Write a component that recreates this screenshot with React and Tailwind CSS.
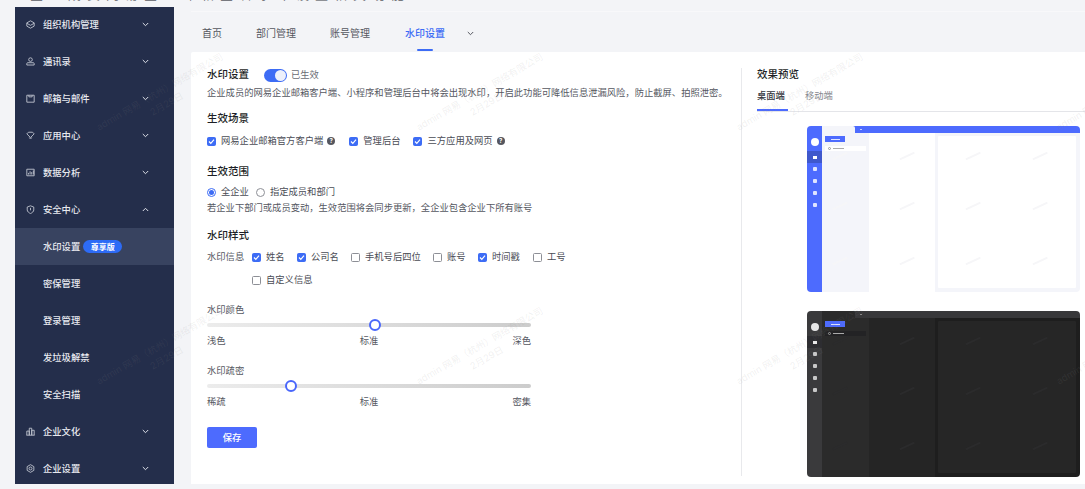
import React from "react";

const font = { fontFamily: '"Inter","Noto Sans CJK SC",sans-serif' };

const Chevron = ({ up }) => (
  <svg width="7" height="5" viewBox="0 0 7 5" fill="none" stroke="currentColor" strokeWidth="1">
    <path d={up ? "M.8 4 3.5 1.300 6.200 4" : "M.8 1 3.500 3.700 6.200 1"} />
  </svg>
);

const I = ({ children }) => (
  <svg width="9" height="9" viewBox="0 0 11 11" fill="none" stroke="#c0c4cf" strokeWidth="1.100" className="shrink-0">
    {children}
  </svg>
);

const icons = {
  org: <I><path d="M1 3.500 5.500 1 10 3.500v4L5.500 10 1 7.500z" /><path d="M1 4l4.500 2.500L10 4" /></I>,
  contact: <I><circle cx="5.500" cy="3.200" r="2.200" /><path d="M1 9.800V8c0-.6.4-1 1-1h7c.6 0 1 .4 1 1v1.800z" /></I>,
  mail: <I><path d="M1 1.500h9v8.500H1z" /><path d="M3.500 1.500v2h4v-2" /></I>,
  app: <I><path d="M1 3.500 3 1.500h5l2 2-4.500 4.500z" /><path d="M3.500 8c1.500 1.300 2.500 1.300 4 0" /></I>,
  data: <I><path d="M1 1.500h9v8H1z" /><path d="M3 8V6M5 8V4M7 8V5M9 8V3" /></I>,
  safe: <I><path d="M5.500 1 9.500 2.500V6c0 2-2 3.500-4 4.500-2-1-4-2.500-4-4.500V2.500z" /><path d="M5.500 3.500V6.500" /></I>,
  culture: <I><path d="M1 10V5h3v5M4 10V1.500h3V10M7 10V4h3v6M.5 10h10" /></I>,
  setting: <I><path d="M5.500 .8 9.600 3.200v4.600L5.500 10.200 1.400 7.800V3.200z" /><circle cx="5.500" cy="5.500" r="1.800" /></I>,
};

const Row = ({ icon, label, open, sub, active, badge }) => (
  <div className={`h-[37px] shrink-0 flex items-center text-[9.300px] text-[#e8eaf0] font-medium ${active ? "bg-[#384360]" : ""}`}>
    <div className="w-[28px] shrink-0 flex justify-end pr-[8px]">{icon && !sub ? icons[icon] : null}</div>
    <span className="whitespace-nowrap">{label}</span>
    {badge && (
      <span className="ml-[3px] h-[13px] w-[39px] rounded-full bg-[#2d6bf6] text-white text-[8px] font-bold flex items-center justify-center">
        {badge}
      </span>
    )}
    {!sub && (
      <span className="ml-auto mr-[25px] text-[#dfe2ea] flex">
        <Chevron up={open} />
      </span>
    )}
  </div>
);

const Check = ({ on }) => (
  <span className={`w-[9px] h-[9px] rounded-[1.500px] shrink-0 flex items-center justify-center border ${on ? "bg-[#3d6cf5] border-[#3d6cf5]" : "bg-white border-[#8d8f96]"}`}>
    {on && (
      <svg width="7" height="7" viewBox="0 0 7 7" fill="none" stroke="#fff" strokeWidth="1.200">
        <path d="M1 3.500 2.800 5.300 6 1.700" />
      </svg>
    )}
  </span>
);

const CheckItem = ({ on, label, help, className = "" }) => (
  <span className={`flex items-center gap-[5px] text-[9.300px] text-[#4a4c55] whitespace-nowrap ${className}`}>
    <Check on={on} />
    {label}
    {help && (
      <span className="ml-[-1px] w-[8px] h-[8px] rounded-full bg-[#55575f] text-white text-[6px] leading-[8px] text-center font-bold">?</span>
    )}
  </span>
);

const H = ({ children, className = "" }) => (
  <div className={`text-[10.500px] leading-[14px] font-medium text-[#1d1f26] ${className}`}>{children}</div>
);

const Slider = ({ title, left, right, pos, className = "" }) => (
  <div className={`w-[324px] ${className}`}>
    <div className="text-[9.300px] leading-[12px] text-[#55575f]">{title}</div>
    <div className="relative h-[4px] mt-[7px] rounded-full bg-gradient-to-r from-[#ececec] to-[#cccccc]">
      <span style={{ left: pos }} className="absolute top-[-4px] w-[12px] h-[12px] rounded-full bg-white border-[2.500px] border-[#4a67fb]" />
    </div>
    <div className="flex justify-between mt-[8px] text-[9.300px] leading-[12px] text-[#55575f]">
      <span>{left}</span>
      <span>标准</span>
      <span>{right}</span>
    </div>
  </div>
);

const Marks = ({ dark }) => (
  <>
    {[29, 79, 134].flatMap((y) =>
      [33, 100, 166, 233].map((x) => (
        <span
          key={`${x}-${y}`}
          style={{ left: `${x - 8}px`, top: `${y}px` }}
          className={`absolute w-[16px] h-[1.500px] -rotate-[25deg] ${dark ? "bg-[#2b2b2c]" : "bg-[#f6f6f8]"}`}
        />
      ))
    )}
  </>
);

const Preview = ({ dark, className = "" }) => {
  const rail = dark ? "bg-[#3a3a3c]" : "bg-[#4d6bfe]";
  const top = dark ? "bg-[#38383a]" : "bg-[#4d6bfe]";
  const side = dark ? "bg-[#2b2b2b]" : "bg-[#f4f5fa]";
  const mid = dark ? "bg-[#252525]" : "bg-white";
  const right = dark ? "bg-[#1e1e1e]" : "bg-[#f4f5fa]";
  const pane = dark ? "bg-[#262626]" : "bg-white";
  const glyph = dark ? "bg-[#e8e8e8]" : "bg-white";
  return (
    <div className={`relative w-[273px] h-[166px] rounded-[4px] overflow-hidden flex ${className}`}>
      <div className={`w-[15px] shrink-0 flex flex-col items-center pt-[12px] ${rail}`}>
        <span className={`w-[8px] h-[8px] rounded-full ${glyph}`} />
        <span className={`mt-[5px] w-full h-[12px] flex items-center justify-center ${dark ? "bg-[#2d2d31]" : "bg-[#3f58cc]"}`}>
          <span className={`w-[4px] h-[3px] ${glyph}`} />
        </span>
        {[0, 1, 2, 3].map((n) => (
          <span key={n} className="h-[12px] flex items-center">
            <span className={`w-[4px] h-[3.500px] rounded-[1px] ${dark ? "bg-[#c8c8c8]" : "bg-[#dfe4ff]"}`} />
          </span>
        ))}
      </div>
      <div className="flex-1 flex flex-col min-w-0">
        <div className={`h-[7px] flex ${top}`}>
          <span className={`w-[33px] rounded-tr-[2px] ${side}`} />
          <span className={`ml-[5px] mt-[3px] w-[2px] h-[1px] ${dark ? "bg-[#888]" : "bg-[#c7d0ff]"}`} />
        </div>
        <div className={`flex-1 flex ${right}`}>
          <div className={`w-[47px] shrink-0 pt-[3px] px-[3px] ${side}`}>
            <div className="w-[20px] h-[6px] bg-[#4d6bfe] flex items-center justify-center">
              <span className="w-[9px] h-[1px] bg-[#dfe4ff]" />
            </div>
            <div className={`mt-[4px] h-[5px] flex items-center pl-[3px] gap-[2px] ${dark ? "bg-[#232325]" : "bg-white"}`}>
              <span className="w-[3px] h-[3px] rounded-full border-[0.500px] border-[#999]" />
              <span className="w-[11px] h-[1px] bg-[#aaa]" />
            </div>
          </div>
          <div className={`w-[66px] shrink-0 ${mid}`} />
          <div className={`flex-1 mt-[3px] mb-[4px] ml-[3px] mr-[4px] rounded-[1px] ${pane}`} />
        </div>
      </div>
      <Marks dark={dark} />
    </div>
  );
};

const WM = ({ x, y }) => (
  <div
    style={{ left: x, top: y }}
    className="absolute pointer-events-none -rotate-[30deg] origin-top-left text-[9.500px] leading-[14px] text-[#8a8a8a]/[0.13] whitespace-nowrap text-center"
  >
    <div>admin 网易（杭州）网络有限公司</div>
    <div>2月29日</div>
  </div>
);

export default function App() {
  return (
    <div style={font} className="relative w-[1085px] h-[489px] overflow-hidden bg-[#f3f4f7] flex flex-col">
      <div className="h-[7px] shrink-0 overflow-hidden pl-[30px] text-[13px] leading-[14px] text-[#77797f] tracking-[6px]">
        <div className="whitespace-nowrap -mt-[13px]">企业成员网易企业邮箱查看水印设置相关功能</div>
      </div>
      <div className="flex-1 flex min-h-0">
        <aside className="ml-[15px] mb-[5px] w-[159px] shrink-0 bg-[#242e4b] overflow-hidden">
          <div className="-mt-px flex flex-col">
            <Row icon="org" label="组织机构管理" />
            <Row icon="contact" label="通讯录" />
            <Row icon="mail" label="邮箱与邮件" />
            <Row icon="app" label="应用中心" />
            <Row icon="data" label="数据分析" />
            <Row icon="safe" label="安全中心" open />
            <Row sub active label="水印设置" badge="尊享版" />
            <Row sub label="密保管理" />
            <Row sub label="登录管理" />
            <Row sub label="发垃圾解禁" />
            <Row sub label="安全扫描" />
            <Row icon="culture" label="企业文化" />
            <Row icon="setting" label="企业设置" />
          </div>
        </aside>
        <main className="ml-[17px] flex-1 min-w-0 flex flex-col mb-[5px]">
          <nav className="mt-[4px] h-[41px] shrink-0 border-t border-[#f8f8fa] flex items-start pt-[14px] pl-[11px] text-[10px] leading-[14px] text-[#55575f]">
            <span className="w-[54px]">首页</span>
            <span className="w-[74px]">部门管理</span>
            <span className="w-[75px]">账号管理</span>
            <span className="relative text-[#3d6cf5] font-medium w-[62px]">
              水印设置
              <span className="absolute left-[12px] top-[23px] w-[16px] h-[2px] rounded-full bg-[#3d6cf5]" />
            </span>
            <span className="mt-[5px] text-[#55575f] flex"><Chevron /></span>
          </nav>
          <section className="flex-1 bg-white flex pl-[16px] pt-[16px] rounded-tl-[2px] min-h-0">
            <div className="w-[534px] shrink-0">
              <div className="flex items-center h-[14px]">
                <H>水印设置</H>
                <span className="ml-[15px] w-[23px] h-[13px] rounded-full bg-[#3d6cf5] flex items-center justify-end pr-[1px]">
                  <span className="w-[11px] h-[11px] rounded-full bg-[#edf0fb]" />
                </span>
                <span className="ml-[4px] text-[9.300px] text-[#6a6c74]">已生效</span>
              </div>
              <div className="mt-[4px] text-[9.300px] leading-[14px] text-[#55575f] whitespace-nowrap">
                企业成员的网易企业邮箱客户端、小程序和管理后台中将会出现水印，开启此功能可降低信息泄漏风险，防止截屏、拍照泄密。
              </div>
              <H className="mt-[12px]">生效场景</H>
              <div className="mt-[9px] flex items-center h-[12px]">
                <CheckItem on help label="网易企业邮箱官方客户端" />
                <CheckItem on label="管理后台" className="ml-[14px]" />
                <CheckItem on help label="三方应用及网页" className="ml-[13px]" />
              </div>
              <H className="mt-[18px]">生效范围</H>
              <div className="mt-[7px] flex items-center h-[12px] text-[9.300px] text-[#4a4c55]">
                <span className="w-[9px] h-[9px] rounded-full border border-[#3d6cf5] flex items-center justify-center">
                  <span className="w-[5px] h-[5px] rounded-full bg-[#3d6cf5]" />
                </span>
                <span className="ml-[5px]">全企业</span>
                <span className="ml-[7px] w-[9px] h-[9px] rounded-full border border-[#8d8f96]" />
                <span className="ml-[5px]">指定成员和部门</span>
              </div>
              <div className="mt-[4px] text-[9.300px] leading-[12px] text-[#55575f] whitespace-nowrap">
                若企业下部门或成员变动，生效范围将会同步更新，全企业包含企业下所有账号
              </div>
              <H className="mt-[15px]">水印样式</H>
              <div className="mt-[8px] flex items-center h-[12px] text-[9.300px] text-[#55575f]">
                <span className="w-[45px]">水印信息</span>
                <CheckItem on label="姓名" className="w-[45px]" />
                <CheckItem on label="公司名" className="w-[54px]" />
                <CheckItem label="手机号后四位" className="w-[82px]" />
                <CheckItem label="账号" className="w-[45px]" />
                <CheckItem on label="时间戳" className="w-[55px]" />
                <CheckItem label="工号" />
              </div>
              <div className="mt-[11px] pl-[45px] h-[12px] flex items-center">
                <CheckItem label="自定义信息" />
              </div>
              <Slider className="mt-[18px]" title="水印颜色" left="浅色" right="深色" pos="162px" />
              <Slider className="mt-[18px]" title="水印疏密" left="稀疏" right="密集" pos="78px" />
              <button className="mt-[19px] w-[50px] h-[21px] rounded-[2px] bg-[#4d6bfe] text-white text-[9.300px] font-medium flex items-center justify-center">
                保存
              </button>
            </div>
            <div className="w-px h-[408px] bg-[#e8e9ec] shrink-0" />
            <div className="flex-1 min-w-0 pl-[15px]">
              <div className="text-[10.500px] leading-[14px] font-medium text-[#1d1f26]">效果预览</div>
              <div className="mt-[8px] flex text-[9.300px] leading-[12px] border-b border-[#e4e5e9] h-[22px] pr-[5px]">
                <span className="relative w-[48px] font-medium text-[#33353d]">
                  桌面端
                  <span className="absolute left-0 top-[19px] w-[31px] h-[2px] bg-[#4d6bfe]" />
                </span>
                <span className="text-[#85878e]">移动端</span>
              </div>
              <div className="pl-[50px]">
                <Preview className="mt-[14px]" />
                <Preview dark className="mt-[19px]" />
              </div>
            </div>
          </section>
        </main>
      </div>
      <WM x="94px" y="122px" />
      <WM x="94px" y="376px" />
      <WM x="414px" y="122px" />
      <WM x="414px" y="376px" />
      <WM x="734px" y="122px" />
      <WM x="734px" y="376px" />
      <WM x="1054px" y="122px" />
      <WM x="1054px" y="376px" />
    </div>
  );
}
